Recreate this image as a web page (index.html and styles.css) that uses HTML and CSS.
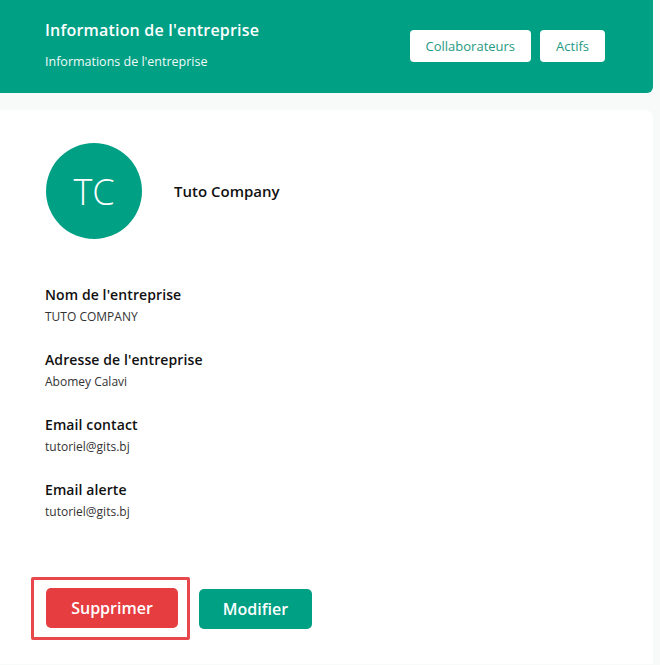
FILE: index.html
```html
<!DOCTYPE html>
<html lang="fr">
<head>
    <meta charset="UTF-8">
    <meta name="viewport" content="width=device-width, initial-scale=1.0">
    <title>Information de l'entreprise</title>
    <link rel="stylesheet" href="styles.css">
</head>
<body>
    <div class="page">
        <div class="header">
            <div class="header-text">
                <h1>Information de l'entreprise</h1>
                <p>Informations de l'entreprise</p>
            </div>
            <div class="header-actions">
                <button class="btn-light">Collaborateurs</button>
                <button class="btn-light">Actifs</button>
            </div>
        </div>

        <div class="card">
            <div class="company">
                <div class="avatar">TC</div>
                <div class="company-name">Tuto Company</div>
            </div>

            <div class="field">
                <div class="label">Nom de l'entreprise</div>
                <div class="value">TUTO COMPANY</div>
            </div>
            <div class="field">
                <div class="label">Adresse de l'entreprise</div>
                <div class="value">Abomey Calavi</div>
            </div>
            <div class="field">
                <div class="label">Email contact</div>
                <div class="value">tutoriel@gits.bj</div>
            </div>
            <div class="field">
                <div class="label">Email alerte</div>
                <div class="value">tutoriel@gits.bj</div>
            </div>

            <div class="actions">
                <div class="highlight">
                    <button class="btn btn-danger">Supprimer</button>
                </div>
                <button class="btn btn-primary">Modifier</button>
            </div>
        </div>
    </div>
</body>
</html>
```

FILE: styles.css
```css
body {
    font-family: "Open Sans", Arial, sans-serif;
    background-color: #f8f9f9;
    margin: 0;
    color: #111;
}

.page {
    width: 653px;
}

.header {
    background-color: #00a085;
    height: 93px;
    border-radius: 0 0 6px 0;
    display: flex;
    justify-content: space-between;
    box-sizing: border-box;
    padding: 0 48px 0 45px;
}

.header-text h1 {
    margin: 19px 0 0;
    font-size: 16px;
    font-weight: 600;
    letter-spacing: 0.2px;
    color: #fff;
    line-height: 22px;
}

.header-text p {
    margin: 13px 0 0;
    font-size: 12.5px;
    color: #f1fbf8;
    line-height: 16px;
}

.header-actions {
    display: flex;
    gap: 9px;
    margin-top: 30px;
    align-items: flex-start;
}

.btn-light {
    background: #fff;
    border: none;
    border-radius: 4px;
    height: 32px;
    padding: 0 16px;
    font-family: inherit;
    font-size: 13px;
    color: #1f9a83;
    cursor: pointer;
}

.card {
    background: #fff;
    margin-top: 17px;
    border-radius: 0 8px 0 0;
    padding: 33px 46px 24px 45px;
    min-height: 540px;
    box-sizing: border-box;
}

.company {
    display: flex;
    align-items: center;
    gap: 32px;
    margin-bottom: 46px;
}

.avatar {
    width: 96px;
    height: 96px;
    margin-left: 1px;
    border-radius: 50%;
    background-color: #00a085;
    color: #fff;
    font-size: 36px;
    font-weight: 300;
    display: flex;
    align-items: center;
    justify-content: center;
}

.company-name {
    font-size: 15px;
    font-weight: 600;
}

.field {
    margin-bottom: 25px;
}

.label {
    font-size: 14px;
    font-weight: 600;
    letter-spacing: 0.1px;
    line-height: 20px;
}

.value {
    font-size: 12px;
    color: #333;
    line-height: 16px;
    margin-top: 4px;
}

.actions {
    display: flex;
    align-items: center;
    gap: 9px;
    margin-top: 57px;
    margin-left: -14px;
}

.highlight {
    border: 3px solid #e8474c;
    padding: 8px 9px 9px 12px;
    border-radius: 2px;
}

.btn {
    height: 40px;
    border: none;
    border-radius: 5px;
    color: #fff;
    font-family: inherit;
    font-size: 16px;
    font-weight: 600;
    cursor: pointer;
}

.btn-danger {
    background-color: #e53d40;
    width: 132px;
}

.btn-primary {
    background-color: #00a085;
    width: 113px;
}
```
